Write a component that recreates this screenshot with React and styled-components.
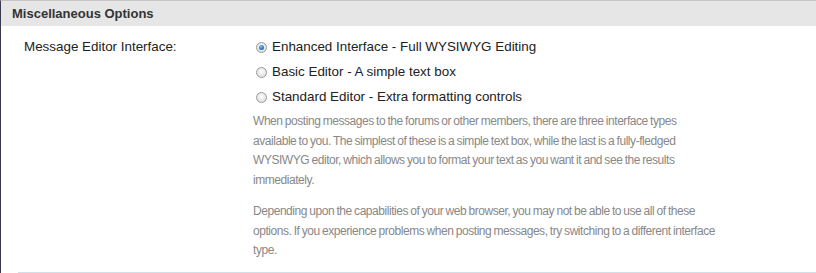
import React from "react";
import styled, { createGlobalStyle } from "styled-components";

const Global = createGlobalStyle`
  html, body { margin: 0; padding: 0; background: #fff; }
  body { font-family: "Liberation Sans", Arial, sans-serif; }
`;

const Panel = styled.section`
  width: 816px;
  height: 273px;
  box-sizing: border-box;
  border-top: 1px solid #c4c4c4;
  border-left: 1px solid #3a3a4e;
  overflow: hidden;
  background: #fff;
`;

const Header = styled.h2`
  margin: 0;
  height: 25px;
  background: #e6e6e6;
  font-size: 13px;
  font-weight: bold;
  color: #333;
  padding: 0 0 0 11px;
  display: flex;
  align-items: center;
  box-sizing: border-box;
`;

const Row = styled.div`
  display: grid;
  grid-template-columns: 232px 1fr;
  margin-left: 17px;
  padding: 12px 0 0 0;
  border-bottom: 1px solid #d2dee8;
  height: 247px;
  box-sizing: border-box;
`;

const Label = styled.div`
  font-size: 13.4px;
  color: #222;
  padding-left: 6px;
  line-height: 18px;
`;

const Options = styled.div`
  display: flex;
  flex-direction: column;
  gap: 7px;
  padding-left: 6px;
`;

const Option = styled.label`
  display: flex;
  align-items: center;
  gap: 5px;
  font-size: 13.4px;
  color: #222;
  line-height: 18px;
`;

const Radio = styled.span`
  width: 11px;
  height: 11px;
  border-radius: 50%;
  box-sizing: border-box;
  border: 1px solid #9a9a9a;
  background: radial-gradient(circle at 50% 40%, #fdfdfd 0%, #e2e2e2 70%, #cfcfcf 100%);
  position: relative;
  flex: none;
  margin-top: 1px;
  &::after {
    content: "";
    display: ${(p) => (p.checked ? "block" : "none")};
    position: absolute;
    left: 2px;
    top: 2px;
    width: 5px;
    height: 5px;
    border-radius: 50%;
    background: radial-gradient(circle at 40% 35%, #7fc4f0 0%, #2a7bc0 55%, #1a4f86 100%);
  }
`;

const Description = styled.div`
  margin-top: 6px;
  padding-left: 3px;
  font-size: 12px;
  line-height: 19.7px;
  color: #888;
  letter-spacing: -0.45px;
  word-spacing: -0.6px;
  white-space: nowrap;
`;

const Para = styled.p`
  margin: 0 0 11px 0;
`;

export default function App() {
  return (
    <>
      <Global />
      <Panel>
        <Header>Miscellaneous Options</Header>
        <Row>
          <Label>Message Editor Interface:</Label>
          <div>
            <Options>
              <Option><Radio checked />Enhanced Interface - Full WYSIWYG Editing</Option>
              <Option><Radio />Basic Editor - A simple text box</Option>
              <Option><Radio />Standard Editor - Extra formatting controls</Option>
            </Options>
            <Description>
              <Para>
                When posting messages to the forums or other members, there are three interface types<br />
                available to you. The simplest of these is a simple text box, while the last is a fully-fledged<br />
                WYSIWYG editor, which allows you to format your text as you want it and see the results<br />
                immediately.
              </Para>
              <Para>
                Depending upon the capabilities of your web browser, you may not be able to use all of these<br />
                options. If you experience problems when posting messages, try switching to a different interface<br />
                type.
              </Para>
            </Description>
          </div>
        </Row>
      </Panel>
    </>
  );
}
